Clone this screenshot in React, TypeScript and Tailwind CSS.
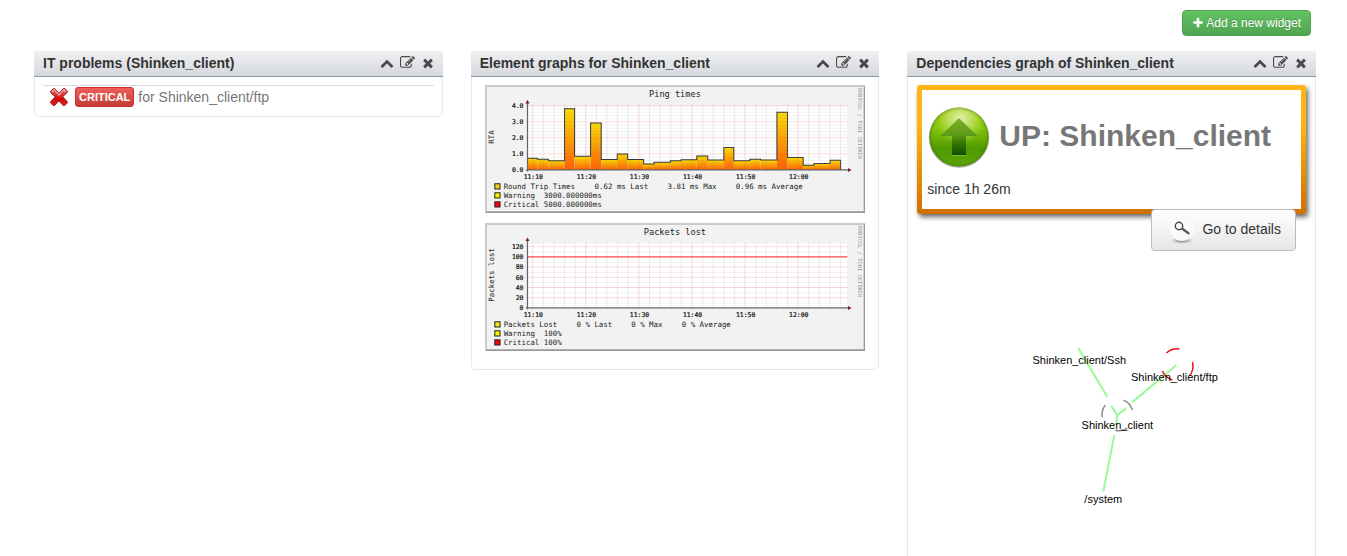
import type { ReactNode } from "react";

const ICONS = {
  up: "M1683 1331l-166 165q-19 19-45 19t-45-19l-531-531-531 531q-19 19-45 19t-45-19l-166-165q-19-19-19-45.5t19-45.5l742-741q19-19 45-19t45 19l742 741q19 19 19 45.5t-19 45.5z",
  edit: "M888 1184l116-116-152-152-116 116v56h96v96h56zm440-720q-16-16-33 1l-350 350q-17 17-1 33t33-1l350-350q17-17 1-33zm80 594v190q0 119-84.5 203.5t-203.5 84.5h-832q-119 0-203.5-84.5t-84.5-203.5v-832q0-119 84.5-203.5t203.5-84.5h832q63 0 117 25 15 7 18 23 3 17-9 29l-49 49q-14 14-32 8-23-6-45-6h-832q-66 0-113 47t-47 113v832q0 66 47 113t113 47h832q66 0 113-47t47-113v-126q0-13 9-22l64-64q15-15 35-7t20 29zm-96-738l288 288-672 672h-288v-288zm444 132l-92 92-288-288 92-92q28-28 68-28t68 28l152 152q28 28 28 68t-28 68z",
  close:
    "M1490 1322q0 40-28 68l-136 136q-28 28-68 28t-68-28l-294-294-294 294q-28 28-68 28t-68-28l-136-136q-28-28-28-68t28-68l294-294-294-294q-28-28-28-68t28-68l136-136q28-28 68-28t68 28l294 294 294-294q28-28 68-28t68 28l136 136q28 28 28 68t-28 68l-294 294 294 294q28 28 28 68z",
  plus: "M1600 736v192q0 40-28 68t-68 28h-416v416q0 40-28 68t-68 28h-192q-40 0-68-28t-28-68v-416h-416q-40 0-68-28t-28-68v-192q0-40 28-68t68-28h416v-416q0-40 28-68t68-28h192q40 0 68 28t28 68v416h416q40 0 68 28t28 68z",
};

function Icon({ name, className }: { name: keyof typeof ICONS; className: string }) {
  return (
    <svg viewBox="0 0 1792 1792" fill="currentColor" aria-hidden="true" className={className}>
      <path d={ICONS[name]} />
    </svg>
  );
}

function Widget({ title, className, children }: { title: string; className: string; children: ReactNode }) {
  return (
    <section className={`min-w-0 rounded-t-[3px] rounded-b-[5px] border border-t-0 border-[#e8e8e8] bg-white ${className}`}>
      <header className="-mx-px flex h-[26px] items-center justify-between rounded-t-[3px] border-b border-[#8b98a5] bg-linear-to-b from-[#eff0f2] to-[#d5d8dd] pr-2 pb-[2px] pl-[9px]">
        <h2 className="truncate text-sm font-bold text-[#333]">{title}</h2>
        <div className="flex items-center gap-[6px] text-[#4a4a4a]">
          <button type="button" aria-label="Collapse">
            <Icon name="up" className="size-[14px]" />
          </button>
          <button type="button" aria-label="Edit">
            <Icon name="edit" className="size-[15px]" />
          </button>
          <button type="button" aria-label="Close">
            <Icon name="close" className="size-[14px]" />
          </button>
        </div>
      </header>
      {children}
    </section>
  );
}

/* Charts are drawn on a 1900 x 640 grid: five units for each pixel at natural size. */
const LEFT = 212;
const RIGHT = 1808;
const FIRST_TICK = 238;
const MINOR = 53;

type Row = { color: string; parts: [number, string][] };

function ChartFrame({
  title,
  unit,
  base,
  top,
  minorY,
  majorY,
  labels,
  rows,
  children,
}: {
  title: string;
  unit: string;
  base: number;
  top: number;
  minorY: number[];
  majorY: number[];
  labels: [number, string][];
  rows: Row[];
  children: ReactNode;
}) {
  const ticks = Array.from({ length: 31 }, (_, i) => FIRST_TICK + i * MINOR).filter((x) => x <= RIGHT);
  return (
    <svg viewBox="0 0 1900 640" role="img" aria-label={title} className="block w-full" fontFamily='"DejaVu Sans Mono", monospace'>
      <rect width="1900" height="640" fill="#f2f2f2" />
      <path d="M0 640V0H1900L1890 10H10V630Z" fill="#cacaca" />
      <path d="M1900 0V640H0L10 630H1890V10Z" fill="#999" />
      <rect x={LEFT} y={top} width={RIGHT - LEFT} height={base - top} fill="#fff" />
      {children}
      {minorY.map((y) => (
        <path key={y} d={`M${LEFT} ${y}H${RIGHT}`} stroke="#8f8f8f" strokeOpacity=".22" strokeWidth="3" />
      ))}
      {ticks.map((x, i) => (
        <path
          key={x}
          d={`M${x} ${top - 6}V${base + 6}`}
          stroke={i % 5 ? "#8f8f8f" : "#e05050"}
          strokeOpacity={i % 5 ? ".2" : ".28"}
          strokeWidth="4"
        />
      ))}
      {majorY.map((y) => (
        <path key={y} d={`M${LEFT - 6} ${y}H${RIGHT + 6}`} stroke="#e05050" strokeOpacity=".25" strokeWidth="4" />
      ))}
      <path d={`M${LEFT} ${base + 8}V${top - 20}M${LEFT - 8} ${base}H${RIGHT + 8}`} stroke="#666" strokeWidth="6" />
      <path d={`M${LEFT - 10} ${top - 12}L${LEFT} ${top - 30}L${LEFT + 10} ${top - 12}Z`} fill="#801f1f" />
      <path d={`M${RIGHT + 4} ${base - 10}L${RIGHT + 22} ${base}L${RIGHT + 4} ${base + 10}Z`} fill="#801f1f" />
      <text x="948" y="58" fontSize="43" textAnchor="middle" fill="#222">
        {title}
      </text>
      <text fontSize="37" textAnchor="middle" fill="#222" transform={`translate(43 ${(base + top) / 2 - 4}) rotate(-90)`}>
        {unit}
      </text>
      <text fontSize="27" fill="#999" transform="translate(1860 14) rotate(90)">
        RRDTOOL / TOBI OETIKER
      </text>
      {labels.map(([y, text]) => (
        <text key={text} x="192" y={y + 12} fontSize="32" textAnchor="end" fill="#111" stroke="#111" strokeWidth="1">
          {text}
        </text>
      ))}
      {["11:10", "11:20", "11:30", "11:40", "11:50", "12:00"].map((text, i) => (
        <text key={text} x={FIRST_TICK + 3 + i * 5 * MINOR} y={base + 43} fontSize="32" textAnchor="middle" fill="#111" stroke="#111" strokeWidth="1">
          {text}
        </text>
      ))}
      {rows.map((row, i) => (
        <g key={i}>
          <rect x="49" y={493 + i * 45} width="26" height="26" fill={row.color} stroke="#222" strokeWidth="5" />
          {row.parts.map(([x, text]) => (
            <text key={x} x={x} y={521 + i * 45} fontSize="37" fill="#222" className="whitespace-pre">
              {text}
            </text>
          ))}
        </g>
      ))}
    </svg>
  );
}

/* Round trip time in ms, with the right-hand end of each step. */
const STEPS: [number, number][] = [
  [261, 0.72], [317, 0.67], [397, 0.58], [447, 3.81], [527, 0.85], [580, 2.92], [660, 0.65], [712, 1],
  [792, 0.65], [843, 0.38], [925, 0.47], [978, 0.58], [1057, 0.64], [1112, 0.87], [1192, 0.63], [1242, 1.4],
  [1322, 0.58], [1376, 0.66], [1457, 0.62], [1510, 3.6], [1588, 0.78], [1642, 0.3], [1722, 0.4], [1775, 0.6],
];

function PingChart() {
  const base = 424;
  const y = (v: number) => Math.round(base - v * 80);
  const outline = STEPS.map(([x, v]) => `V${y(v)}H${x}`).join("");
  return (
    <ChartFrame
      title="Ping times"
      unit="RTA"
      base={base}
      top={104}
      minorY={Array.from({ length: 20 }, (_, i) => base - 16 * (i + 1)).filter((_, i) => (i + 1) % 5 !== 0)}
      majorY={[1, 2, 3, 4].map(y)}
      labels={[0, 1, 2, 3, 4].map((v) => [y(v), v.toFixed(1)])}
      rows={[
        { color: "#f7d11a", parts: [[93, "Round Trip Times"], [547, "0.62 ms Last"], [911, "3.81 ms Max"], [1252, "0.96 ms Average"]] },
        { color: "#fff200", parts: [[93, "Warning  3000.000000ms"]] },
        { color: "#f00", parts: [[93, "Critical 5000.000000ms"]] },
      ]}
    >
      <defs>
        <linearGradient id="rta" x1="0" y1="0" x2="0" y2="1">
          <stop offset="0" stopColor="#fcdc00" />
          <stop offset="1" stopColor="#ff5f00" />
        </linearGradient>
      </defs>
      {STEPS.map(([x, v], i) => {
        const start = i ? STEPS[i - 1][0] : LEFT;
        return <rect key={x} x={start} y={y(v)} width={x - start} height={base - y(v)} fill="url(#rta)" />;
      })}
      <path d={`M${LEFT} ${y(0.72)}${outline}V${base}`} fill="none" stroke="#333" strokeWidth="5" />
    </ChartFrame>
  );
}

function PacketsChart() {
  const base = 424;
  const y = (v: number) => Math.round(base - v * 2.55);
  return (
    <ChartFrame
      title="Packets lost"
      unit="Packets lost"
      base={base}
      top={102}
      minorY={[10, 30, 50, 70, 90, 110].map(y)}
      majorY={[20, 40, 60, 80, 100, 120].map(y)}
      labels={[0, 20, 40, 60, 80, 100, 120].map((v) => [y(v), String(v)])}
      rows={[
        { color: "#f5e416", parts: [[93, "Packets Lost"], [457, "0 % Last"], [730, "0 % Max"], [982, "0 % Average"]] },
        { color: "#fff200", parts: [[93, "Warning  100%"]] },
        { color: "#f00", parts: [[93, "Critical 100%"]] },
      ]}
    >
      <path d={`M${LEFT} ${y(100)}H${RIGHT}`} stroke="#ff5050" strokeWidth="7" />
    </ChartFrame>
  );
}

function CriticalCross() {
  return (
    <svg viewBox="0 0 20 20" aria-hidden="true" className="size-5 shrink-0">
      <defs>
        <linearGradient id="cross" x1="0" y1="0" x2="0" y2="1">
          <stop offset="0" stopColor="#e0696c" />
          <stop offset=".45" stopColor="#d8282d" />
          <stop offset=".6" stopColor="#d0060d" />
          <stop offset="1" stopColor="#e8292b" />
        </linearGradient>
      </defs>
      <path
        d="M1.6 4.4L4.600 1.6Q5.2 1.2 5.9 1.8L10 6.4L14.3 1.6Q15 1 15.7 1.6L18.3 4Q18.9 4.6 18.3 5.3L13.7 9.8L18.2 14.8Q18.7 15.6 18 16.2L15.6 18.6Q14.8 19.1 14.1 18.4L9.9 13.8L5.6 18.4Q4.9 19 4.2 18.4L1.7 16Q1.2 15.3 1.8 14.6L6.3 9.9L1.7 5.6Q1.1 5 1.6 4.4Z"
        fill="url(#cross)"
        stroke="#a31318"
        strokeWidth="1"
      />
      <path d="M3 5L5.2 3L10 8L14.9 3L16.9 4.8" fill="none" stroke="#fff" strokeOpacity=".5" strokeWidth="1.3" />
    </svg>
  );
}

function UpOrb() {
  return (
    <svg viewBox="0 0 64 64" aria-hidden="true" className="size-16 shrink-0">
      <defs>
        <linearGradient id="orb" x1="0" y1="0" x2="0" y2="1">
          <stop offset="0" stopColor="#a9d410" />
          <stop offset=".35" stopColor="#86c40c" />
          <stop offset=".7" stopColor="#4f9a02" />
          <stop offset="1" stopColor="#5fa508" />
        </linearGradient>
        <radialGradient id="orbLight" cx=".52" cy=".2" r=".42">
          <stop offset="0" stopColor="#eef6cf" stopOpacity=".9" />
          <stop offset=".5" stopColor="#d5ec90" stopOpacity=".55" />
          <stop offset="1" stopColor="#c5e860" stopOpacity="0" />
        </radialGradient>
        <radialGradient id="orbEdge" cx=".5" cy=".5" r=".5">
          <stop offset=".88" stopColor="#2d6a00" stopOpacity="0" />
          <stop offset="1" stopColor="#2d6a00" stopOpacity=".35" />
        </radialGradient>
        <linearGradient id="arrow" x1="0" y1="0" x2="0" y2="1">
          <stop offset="0" stopColor="#7fb028" />
          <stop offset=".45" stopColor="#5c9a18" />
          <stop offset=".7" stopColor="#2f7000" />
          <stop offset="1" stopColor="#124e00" />
        </linearGradient>
      </defs>
      <circle cx="32" cy="32.6" r="30.2" fill="#777" fillOpacity=".6" />
      <circle cx="32" cy="32" r="29.6" fill="url(#orb)" />
      <circle cx="32" cy="32" r="29.6" fill="url(#orbLight)" />
      <circle cx="32" cy="32" r="29.6" fill="url(#orbEdge)" />
      <path d="M32 13L50.5 31H39V50.6H25V31H13.5Z" fill="url(#arrow)" />
      <path d="M25 50.6H39" stroke="#86c030" />
    </svg>
  );
}

function Magnifier() {
  return (
    <svg viewBox="0 0 30 30" aria-hidden="true" className="size-[30px]">
      <defs>
        <radialGradient id="lensShadow">
          <stop offset="0" stopColor="#555" stopOpacity=".9" />
          <stop offset="1" stopColor="#888" stopOpacity="0" />
        </radialGradient>
      </defs>
      <ellipse cx="15" cy="26.4" rx="11" ry="3.6" fill="url(#lensShadow)" />
      <circle cx="15" cy="14.5" r="12.5" fill="#fafafa" />
      <circle cx="12" cy="12" r="3.7" fill="none" stroke="#444" strokeWidth="1.4" />
      <path d="M15 14.5L22.3 19.8" stroke="#555" strokeWidth="2.2" />
    </svg>
  );
}

function DependencyGraph() {
  return (
    <svg viewBox="0 0 406 200" role="img" aria-label="Dependencies of Shinken_client" className="block w-full" fontFamily='"Liberation Sans", Arial, sans-serif' fontSize="11" textAnchor="middle">
      <g stroke="#98fb98" strokeWidth="2" fill="none">
        <path d="M170 17L199 66M203 75L209 84L218 77M224 71L268 34M209 84L208 94M206 104L195 160" />
      </g>
      <g fill="none" strokeWidth="1.5">
        <path d="M194 86A15 15 0 0 1 197 74M215 69A15 15 0 0 1 224 79M207 99A15 15 0 0 0 219 97" stroke="#888" />
        <path d="M258 22A16 16 0 0 1 271 18M284 31A16 16 0 0 1 281 45M254 40A16 16 0 0 0 264 49" stroke="#e8101c" />
      </g>
      <text x="171" y="33">Shinken_client/Ssh</text>
      <text x="266" y="50">Shinken_client/ftp</text>
      <text x="209" y="98">Shinken_client</text>
      <text x="195" y="172">/system</text>
    </svg>
  );
}

export default function App() {
  return (
    <main className="h-screen overflow-hidden bg-white pr-[31px] pl-[34px] font-['Liberation_Sans',Arial,sans-serif] text-[#333]">
      <div className="flex justify-end pt-[10px] pr-[5px] pb-[15px]">
        <button
          type="button"
          className="flex h-[26px] items-center gap-[2px] rounded border border-[#51a351] bg-linear-to-b from-[#62c462] to-[#51a351] px-[9px] text-xs text-white text-shadow-[0_-1px_0_#00000040]"
        >
          <Icon name="plus" className="size-3" />
          Add a new widget
        </button>
      </div>

      <div className="grid grid-cols-3 items-start gap-7">
        <Widget title="IT problems (Shinken_client)" className="pb-[9px]">
          <div className="mx-2 mt-2 flex items-center gap-1 border-t border-[#ddd] pt-px pl-[6px] text-sm text-[#777]">
            <CriticalCross />
            <span className="ml-[2px] rounded-[3px] border border-[#c9302c] bg-linear-to-b from-[#ee5f5b] to-[#c43c35] px-[3px] py-px text-[11px] leading-4 font-bold text-white">
              CRITICAL
            </span>
            <a href="#ftp">for Shinken_client/ftp</a>
          </div>
        </Widget>

        <Widget title="Element graphs for Shinken_client" className="pb-[18px]">
          <div className="flex flex-col gap-[10px] px-[13px] pt-2">
            <PingChart />
            <PacketsChart />
          </div>
        </Widget>

        <Widget title="Dependencies graph of Shinken_client" className="h-[520px]">
          <div className="relative mx-[9px] mt-2 rounded-[3px] bg-linear-to-b from-[#ffb515] from-30% to-[#d07000] p-[5px] shadow-[2px_3px_5px_#00000099]">
            <div className="flex h-[119px] flex-col bg-white px-[5px] pt-[15px]">
              <div className="flex items-center gap-2">
                <UpOrb />
                <h3 className="pb-1 text-[30px] font-bold whitespace-nowrap text-[#777]">UP: Shinken_client</h3>
              </div>
              <p className="mt-[10px] text-sm">since 1h 26m</p>
            </div>
            <button
              type="button"
              className="absolute right-[10px] -bottom-[37px] flex h-[42px] items-center gap-[5px] rounded border border-[#bbb] bg-linear-to-b from-white to-[#e6e6e6] pr-[14px] pb-[2px] pl-[15px] text-sm text-[#333]"
            >
              <Magnifier />
              Go to details
            </button>
          </div>
          <div className="pt-[117px]">
            <DependencyGraph />
          </div>
        </Widget>
      </div>
    </main>
  );
}
